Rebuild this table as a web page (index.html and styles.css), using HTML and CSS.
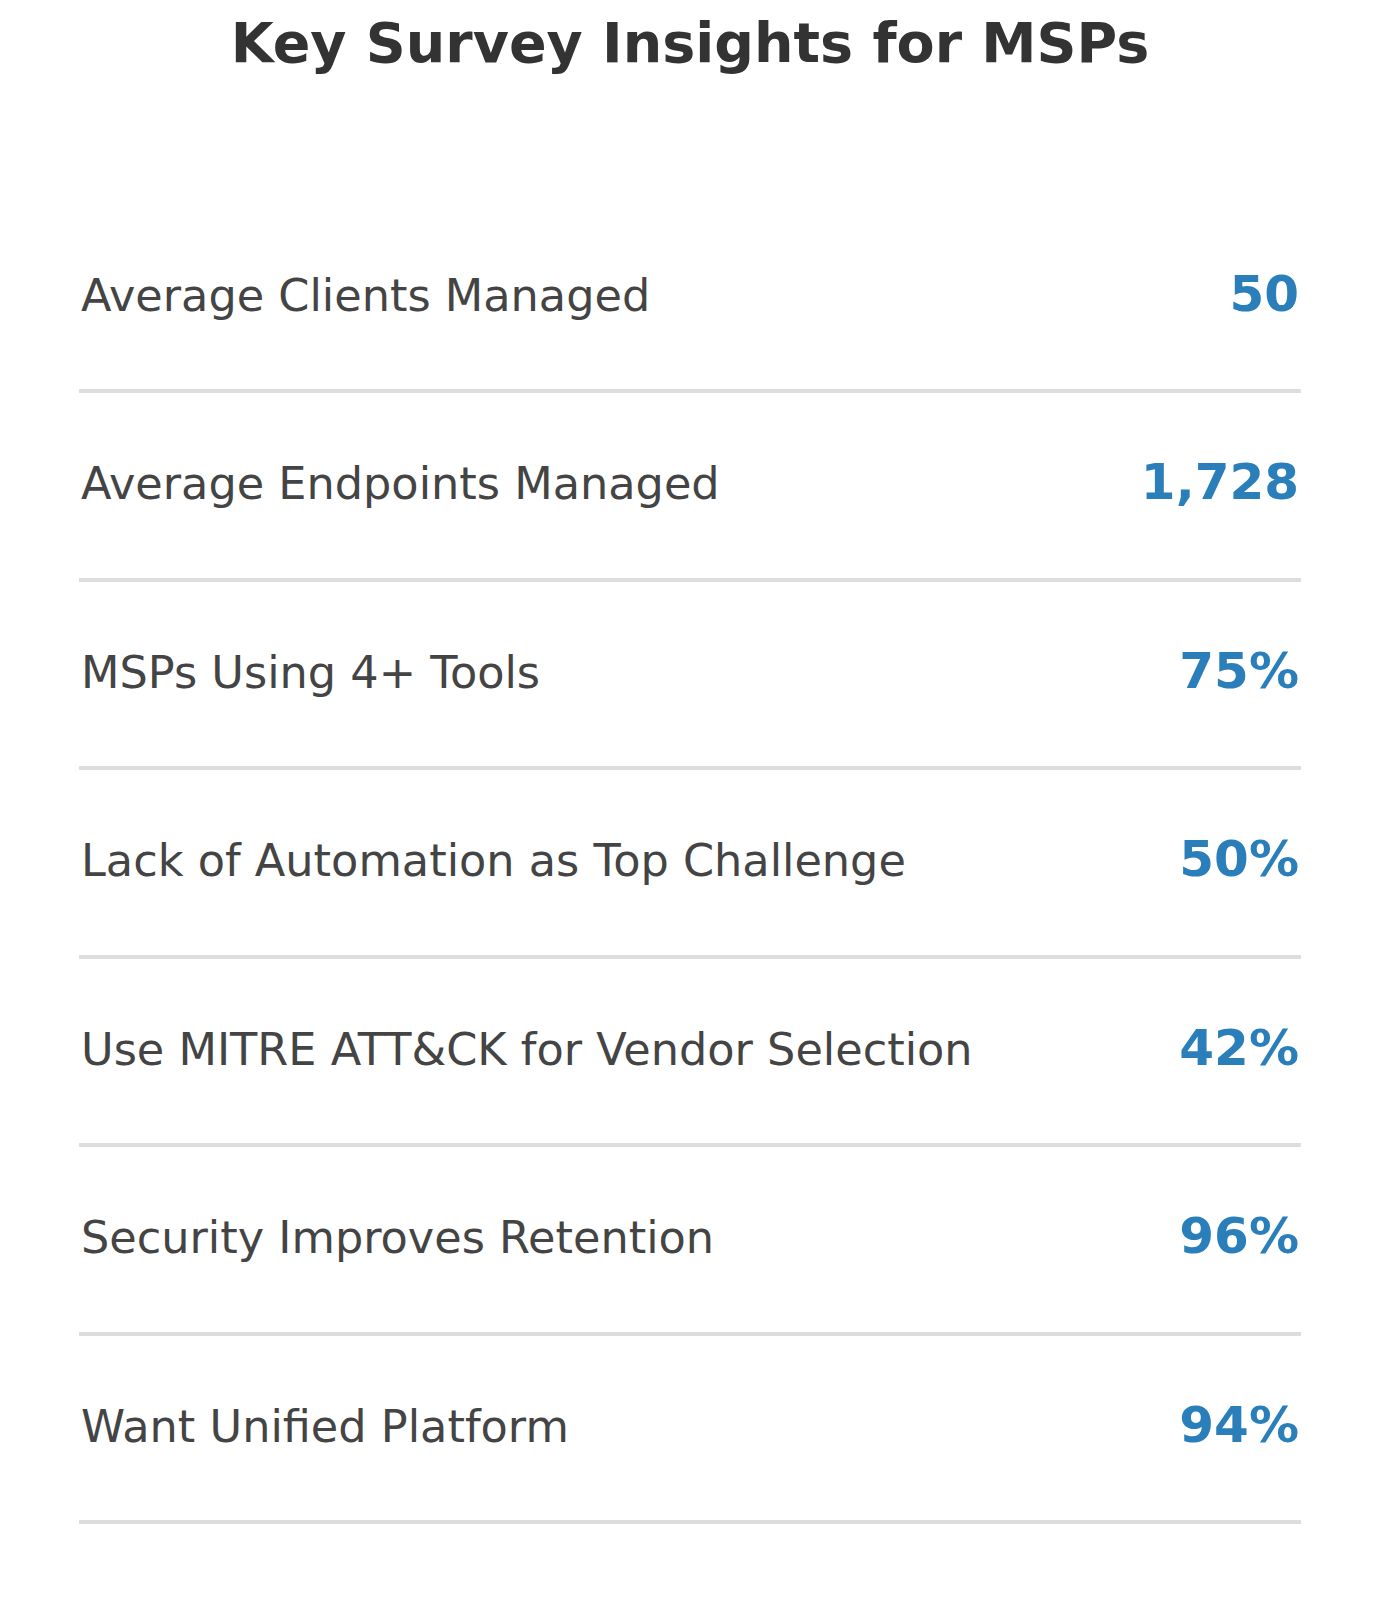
FILE: index.html
```html
<!DOCTYPE html>
<html lang="en">
<head>
<meta charset="utf-8">
<title>Key Survey Insights for MSPs</title>
<link rel="stylesheet" href="styles.css">
</head>
<body>
<main class="page">
  <h1 class="title">Key Survey Insights for MSPs</h1>
  <ul class="stats">
    <li class="stat"><span class="label">Average Clients Managed</span><span class="value">50</span></li>
    <li class="stat"><span class="label">Average Endpoints Managed</span><span class="value">1,728</span></li>
    <li class="stat"><span class="label">MSPs Using 4+ Tools</span><span class="value">75%</span></li>
    <li class="stat"><span class="label">Lack of Automation as Top Challenge</span><span class="value">50%</span></li>
    <li class="stat"><span class="label">Use MITRE ATT&amp;CK for Vendor Selection</span><span class="value">42%</span></li>
    <li class="stat"><span class="label">Security Improves Retention</span><span class="value">96%</span></li>
    <li class="stat"><span class="label">Want Unified Platform</span><span class="value">94%</span></li>
  </ul>
</main>
</body>
</html>
```
FILE: styles.css
```css
html, body {
  margin: 0;
  padding: 0;
  background: #ffffff;
}

body {
  font-family: "DejaVu Sans", "Noto Sans", sans-serif;
}

.page {
  padding: 0 79px;
}

.title {
  margin: 11px 0 0;
  font-size: 55.5px;
  font-weight: bold;
  line-height: 64px;
  color: #333333;
  text-align: center;
}

.stats {
  list-style: none;
  margin: 129.5px 0 0;
  padding: 0;
}

.stat {
  display: flex;
  justify-content: space-between;
  align-items: center;
  height: 184.5px;
  border-bottom: 4px solid #dddddd;
}

.label {
  font-size: 44.6px;
  color: #444444;
  padding-left: 2px;
  position: relative;
  top: -1px;
}

.value {
  font-size: 50px;
  font-weight: bold;
  color: #2a7fba;
  padding-right: 2px;
  position: relative;
  top: -3px;
}
```
